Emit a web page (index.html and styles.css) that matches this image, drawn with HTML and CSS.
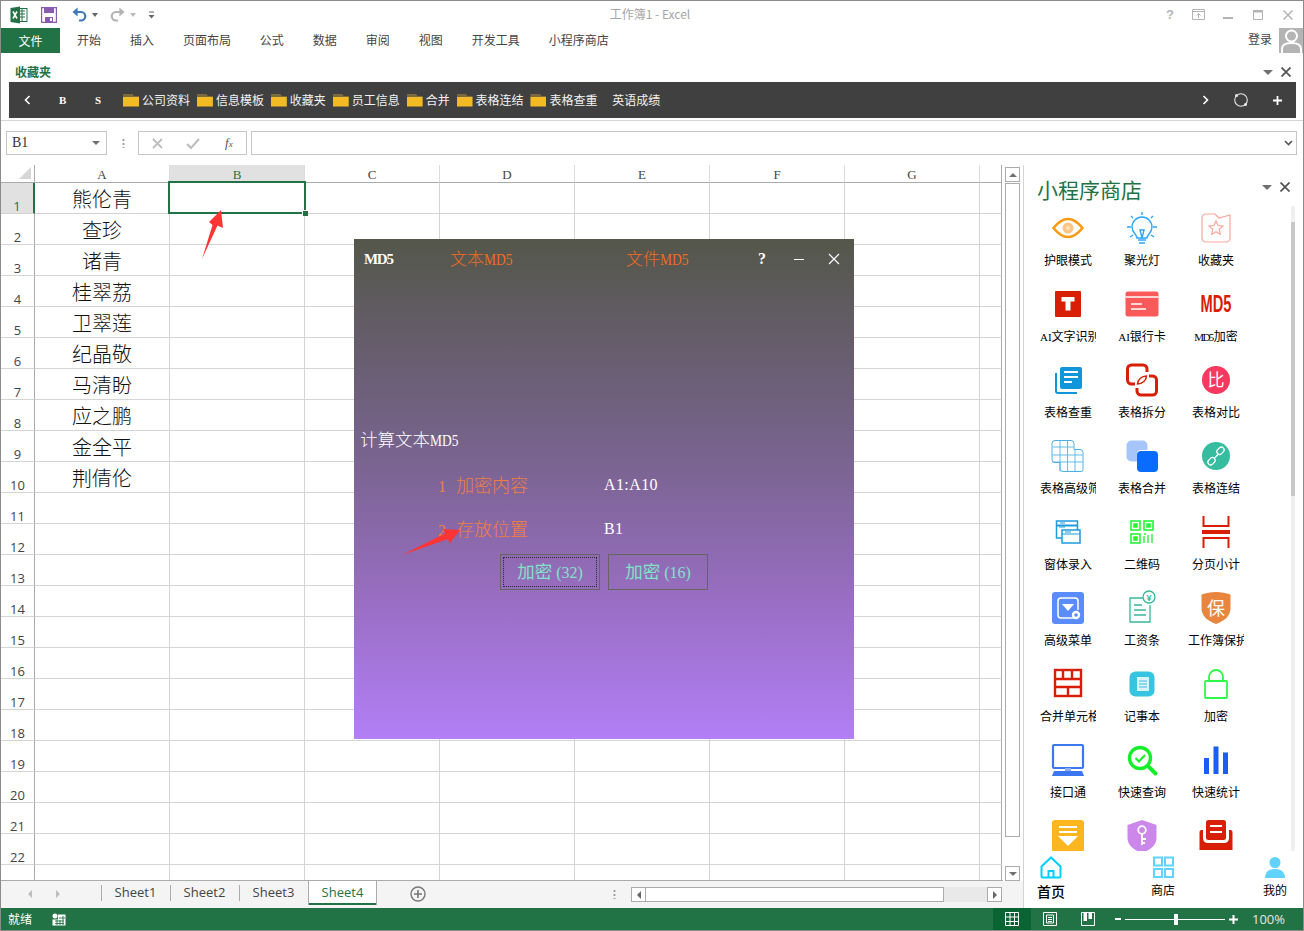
FILE: index.html
```html
<!DOCTYPE html>
<html lang="zh">
<head>
<meta charset="utf-8">
<title>工作簿1 - Excel</title>
<link rel="stylesheet" href="styles.css">
</head>
<body>
<div class="app">
  <header class="titlebar">
    <div class="qat">
      <svg class="q-xl" width="18" height="18" viewBox="0 0 18 18"><rect x="7" y="2.500" width="10" height="13" fill="#fff" stroke="#217346"/><path d="M9 5h6M9 8h6M9 11h6M12 3v12" stroke="#217346" stroke-width="1"/><path d="M0.500 2 10 .5v17L.5 16z" fill="#217346"/><path d="M3 5.500l4 7M7 5.500l-4 7" stroke="#fff" stroke-width="1.600"/></svg>
      <svg class="q-save" width="16" height="16" viewBox="0 0 16 16"><path d="M.5.500h15v15H.5z" fill="#fff" stroke="#8a5bb0" stroke-width="1.400"/><path d="M3 1h10v5H3z" fill="#8a5bb0"/><path d="M4 10h8v5.500H4z" fill="#8a5bb0"/><path d="M9 11h2v3H9z" fill="#fff"/></svg>
      <svg class="q-undo" width="15" height="15" viewBox="0 0 15 15"><path d="M2.500 5H9a4.200 4.200 0 0 1 0 8.500H7" fill="none" stroke="#3e78b8" stroke-width="2.200"/><path d="M5.600.6v9L.5 5z" fill="#3e78b8"/></svg>
      <span class="caret c-a"></span>
      <svg class="q-redo" width="15" height="15" viewBox="0 0 15 15"><path d="M12.500 5H6a4.200 4.200 0 0 0 0 8.500H8" fill="none" stroke="#b4b4b4" stroke-width="2.200"/><path d="M9.400.6v9L14.500 5z" fill="#b4b4b4"/></svg>
      <span class="caret c-b"></span>
      <svg class="q-more" width="7" height="8" viewBox="0 0 7 8"><path d="M1 1h5" stroke="#666"/><path d="M.5 4h6L3.500 7.500z" fill="#666"/></svg>
    </div>
    <div class="doc-title">工作簿1 - Excel</div>
    <div class="winbtns">
      <span class="help">?</span>
      <svg width="13" height="11" viewBox="0 0 13 11"><path d="M.5.500h12v10H.5z" fill="none" stroke="#b4b4b4"/><path d="M1 2.500h11" stroke="#b4b4b4"/><path d="M6.500 9V4.500M4.500 6.500l2-2 2 2" fill="none" stroke="#b4b4b4"/></svg>
      <svg width="10" height="11" viewBox="0 0 10 11"><path d="M0 9h10" stroke="#b4b4b4" stroke-width="2"/></svg>
      <svg width="10" height="10" viewBox="0 0 10 10"><path d="M.5.500h9v9h-9z" fill="none" stroke="#b4b4b4"/><path d="M0 1.500h10" stroke="#b4b4b4" stroke-width="2"/></svg>
      <svg width="10" height="10" viewBox="0 0 10 10"><path d="M.5.500l9 9M9.500.500l-9 9" stroke="#b4b4b4" stroke-width="1.500"/></svg>
    </div>
  </header>

  <nav class="tabs">
    <span class="tab-file">文件</span>
    <div class="tab-list">
      <span>开始</span><span>插入</span><span>页面布局</span><span>公式</span><span>数据</span><span>审阅</span><span>视图</span><span>开发工具</span><span>小程序商店</span>
    </div>
    <div class="login">登录</div>
    <div class="avatar"><svg width="25" height="25" viewBox="0 0 25 25"><circle cx="12.500" cy="8" r="5.500" fill="none" stroke="#fff" stroke-width="2"/><path d="M3 25v-4c0-4 4-6 9.500-6s9.500 2 9.500 6v4" fill="none" stroke="#fff" stroke-width="2"/></svg></div>
  </nav>

  <section class="ribbon">
    <div class="fav-head">
      <span class="fav-title">收藏夹</span>
      <span class="pane-tools"><span class="tri"></span><svg width="10" height="10" viewBox="0 0 10 10"><path d="M.5.500l9 9M9.500.500l-9 9" stroke="#555" stroke-width="1.800"/></svg></span>
    </div>
    <div class="fav-bar">
      <svg class="fb-prev" width="7" height="10" viewBox="0 0 7 10"><path d="M5.500 1l-4 4 4 4" fill="none" stroke="#fff" stroke-width="1.600"/></svg>
      <span class="fb-b">B</span>
      <span class="fb-s">S</span>
      <span class="fb-item"><i class="folder"></i>公司资料</span>
      <span class="fb-item"><i class="folder"></i>信息模板</span>
      <span class="fb-item"><i class="folder"></i>收藏夹</span>
      <span class="fb-item"><i class="folder"></i>员工信息</span>
      <span class="fb-item"><i class="folder"></i>合并</span>
      <span class="fb-item"><i class="folder"></i>表格连结</span>
      <span class="fb-item"><i class="folder"></i>表格查重</span>
      <span class="fb-plain">英语成绩</span>
      <svg class="fb-next" width="7" height="10" viewBox="0 0 7 10"><path d="M1.500 1l4 4-4 4" fill="none" stroke="#fff" stroke-width="1.600"/></svg>
      <svg class="fb-refresh" width="16" height="16" viewBox="0 0 16 16"><circle cx="8" cy="8" r="6.300" fill="none" stroke="#e8e8e8" stroke-width="1.100"/><circle cx="3.500" cy="3.500" r="1.500" fill="#e8e8e8"/><circle cx="12.500" cy="12.500" r="1.500" fill="#e8e8e8"/></svg>
      <svg class="fb-plus" width="9" height="9" viewBox="0 0 9 9"><path d="M4.500 0v9M0 4.500h9" stroke="#fff" stroke-width="1.800"/></svg>
    </div>
  </section>

  <section class="formula">
    <div class="namebox"><span class="lat-l">B1</span><span class="tri tri-s"></span></div>
    <div class="dots"></div>
    <div class="fx-box">
      <svg width="11" height="11" viewBox="0 0 11 11"><path d="M1 1l9 9M10 1l-9 9" stroke="#bdbdbd" stroke-width="1.800"/></svg>
      <svg width="14" height="11" viewBox="0 0 14 11"><path d="M1 6l4 4 8-9" fill="none" stroke="#bdbdbd" stroke-width="2"/></svg>
      <span class="fx">f<span class="fx-x">x</span></span>
    </div>
    <div class="fx-input"><svg width="9" height="6" viewBox="0 0 9 6"><path d="M1 1l3.500 3.500L8 1" fill="none" stroke="#555" stroke-width="1.600"/></svg></div>
  </section>

  <main class="workspace">
    <div class="book">
      <div class="sheet-row">
        <div class="grid-wrap">
          <table class="grid">
            <thead>
              <tr><th class="corner"><i></i></th><th>A</th><th class="on">B</th><th>C</th><th>D</th><th>E</th><th>F</th><th>G</th><th></th></tr>
            </thead>
            <tbody>
              <tr><th class="on">1</th><td>熊伦青</td><td class="sel"><div class="selbox"><i></i></div></td><td></td><td></td><td></td><td></td><td></td><td></td></tr>
              <tr><th>2</th><td>查珍</td><td></td><td></td><td></td><td></td><td></td><td></td><td></td></tr>
              <tr><th>3</th><td>诸青</td><td></td><td></td><td></td><td></td><td></td><td></td><td></td></tr>
              <tr><th>4</th><td>桂翠荔</td><td></td><td></td><td></td><td></td><td></td><td></td><td></td></tr>
              <tr><th>5</th><td>卫翠莲</td><td></td><td></td><td></td><td></td><td></td><td></td><td></td></tr>
              <tr><th>6</th><td>纪晶敬</td><td></td><td></td><td></td><td></td><td></td><td></td><td></td></tr>
              <tr><th>7</th><td>马清盼</td><td></td><td></td><td></td><td></td><td></td><td></td><td></td></tr>
              <tr><th>8</th><td>应之鹏</td><td></td><td></td><td></td><td></td><td></td><td></td><td></td></tr>
              <tr><th>9</th><td>金全平</td><td></td><td></td><td></td><td></td><td></td><td></td><td></td></tr>
              <tr><th>10</th><td>荆倩伦</td><td></td><td></td><td></td><td></td><td></td><td></td><td></td></tr>
              <tr><th>11</th><td></td><td></td><td></td><td></td><td></td><td></td><td></td><td></td></tr>
              <tr><th>12</th><td></td><td></td><td></td><td></td><td></td><td></td><td></td><td></td></tr>
              <tr><th>13</th><td></td><td></td><td></td><td></td><td></td><td></td><td></td><td></td></tr>
              <tr><th>14</th><td></td><td></td><td></td><td></td><td></td><td></td><td></td><td></td></tr>
              <tr><th>15</th><td></td><td></td><td></td><td></td><td></td><td></td><td></td><td></td></tr>
              <tr><th>16</th><td></td><td></td><td></td><td></td><td></td><td></td><td></td><td></td></tr>
              <tr><th>17</th><td></td><td></td><td></td><td></td><td></td><td></td><td></td><td></td></tr>
              <tr><th>18</th><td></td><td></td><td></td><td></td><td></td><td></td><td></td><td></td></tr>
              <tr><th>19</th><td></td><td></td><td></td><td></td><td></td><td></td><td></td><td></td></tr>
              <tr><th>20</th><td></td><td></td><td></td><td></td><td></td><td></td><td></td><td></td></tr>
              <tr><th>21</th><td></td><td></td><td></td><td></td><td></td><td></td><td></td><td></td></tr>
              <tr><th>22</th><td></td><td></td><td></td><td></td><td></td><td></td><td></td><td></td></tr>
              <tr><th></th><td></td><td></td><td></td><td></td><td></td><td></td><td></td><td></td></tr>
            </tbody>
          </table>
        </div>
        <div class="vscroll">
          <span class="sb-btn"><i class="up"></i></span>
          <span class="sb-thumb"></span>
          <span class="sb-btn"><i class="down"></i></span>
        </div>
      </div>
      <div class="sheet-bar">
        <div class="sheet-nav"><i class="left"></i><i class="right"></i></div>
        <div class="sheet-tabs">
          <span>Sheet1</span><span>Sheet2</span><span>Sheet3</span><span class="active">Sheet4</span>
        </div>
        <svg class="add-sheet" width="16" height="16" viewBox="0 0 16 16"><circle cx="8" cy="8" r="7" fill="none" stroke="#777" stroke-width="1.400"/><path d="M8 4v8M4 8h8" stroke="#777" stroke-width="1.600"/></svg>
        <div class="dots dots-h"></div>
        <div class="hscroll">
          <span class="hs-btn"><i class="left dark"></i></span>
          <span class="hs-thumb"></span>
          <span class="hs-btn"><i class="right dark"></i></span>
        </div>
      </div>
    </div>

    <aside class="pane">
      <div class="pane-head">
        <h2>小程序商店</h2>
        <span class="pane-tools"><span class="tri"></span><svg width="10" height="10" viewBox="0 0 10 10"><path d="M.5.500l9 9M9.500.500l-9 9" stroke="#555" stroke-width="1.800"/></svg></span>
      </div>
      <div class="pane-body">
        <div class="tiles">
          <div class="tile"><svg width="40" height="40" viewBox="0 0 40 40"><path d="M5.500 20Q20 2 34.500 20 20 38 5.500 20z" fill="#fff" stroke="#fa9a14" stroke-width="2.600"/><circle cx="20" cy="20" r="5.500" fill="#fbc583"/><circle cx="20" cy="20" r="2" fill="#fde3c3"/></svg><span>护眼模式</span></div>
          <div class="tile"><svg width="40" height="40" viewBox="0 -3 40 40" fill="none" stroke="#2ea7ff" stroke-width="1.400"><path d="M15 27c0-4-5-5-5-11a10 10 0 0 1 20 0c0 6-5 7-5 11z"/><path d="M16 29h8M17 32h6M18 19h4l-2 8zM20 1v3M9 5l2 2M31 5l-2 2M5 16h4M31 16h4M8 26l3-2M32 26l-3-2"/></svg><span>聚光灯</span></div>
          <div class="tile"><svg width="40" height="40" viewBox="0 0 40 40" fill="none" stroke="#f9a79a" stroke-width="1.200"><path d="M6 10a4 4 0 0 1 4-4h9l4 4 11-3v23a4 4 0 0 1-4 4H10a4 4 0 0 1-4-4z"/><path d="M20 13l2 4.500 5 .5-3.700 3.300 1 5-4.300-2.500-4.300 2.500 1-5L13 18l5-.5z"/></svg><span>收藏夹</span></div>

          <div class="tile"><svg width="40" height="40" viewBox="0 0 40 40"><rect x="7" y="7" width="26" height="26" rx="1" fill="#d81e06"/><path d="M13.500 13h13v4.500h-4v9h-5v-9h-4z" fill="#fff"/></svg><span><b class="lat">AI</b>文字识别</span></div>
          <div class="tile"><svg width="40" height="40" viewBox="0 0 40 40"><rect x="3.500" y="7.500" width="33" height="25" rx="2.500" fill="#fb5a5a"/><path d="M3.500 13h33" stroke="#fff" stroke-width="1.500"/><path d="M9 20h11M9 25h15" stroke="#fff" stroke-width="1.500"/></svg><span><b class="lat">AI</b>银行卡</span></div>
          <div class="tile"><svg width="40" height="40" viewBox="0 0 40 40"><text class="md5" x="4.500" y="28" textLength="31" lengthAdjust="spacingAndGlyphs">MD5</text></svg><span><b class="lat tight">MD5</b>加密</span></div>

          <div class="tile"><svg width="40" height="40" viewBox="0 0 40 40"><rect x="12" y="7" width="22" height="22" rx="2" fill="#1296db"/><path d="M8 13v18a2 2 0 0 0 2 2h19" fill="none" stroke="#1296db" stroke-width="2"/><path d="M16 12h14M16 17h14M16 22h8" stroke="#fff" stroke-width="2.200"/></svg><span>表格查重</span></div>
          <div class="tile"><svg width="40" height="40" viewBox="0 0 40 40" fill="none" stroke="#d81e06" stroke-width="3"><path d="M25 12V9a4 4 0 0 0-4-4H9.500a4 4 0 0 0-4 4v11a4 4 0 0 0 4 4H13"/><path d="M15 28v3a4 4 0 0 0 4 4h11.500a4 4 0 0 0 4-4V20a4 4 0 0 0-4-4H27"/><path d="M15.500 24c0-4 4-8 9-8 0 4-4 8-9 8z" stroke-width="1.500"/></svg><span>表格拆分</span></div>
          <div class="tile"><svg width="40" height="40" viewBox="0 0 40 40"><circle cx="20" cy="20" r="14" fill="#f9395f"/><text class="inicon" x="20" y="26" font-size="17">比</text></svg><span>表格对比</span></div>

          <div class="tile"><svg width="40" height="40" viewBox="0 0 40 40" fill="none" stroke="#49b1e8"><path d="M7 4.500h16a3 3 0 0 1 3 3v6h6a3 3 0 0 1 3 3v17a2 2 0 0 1-2 2H15a3 3 0 0 1-3-3v-6H7a3 3 0 0 1-3-3V7.500a3 3 0 0 1 3-3z"/><path d="M4.500 11h21M4.500 19h30M4.500 26h30M12 4.500v31M19.500 4.500v31M27 13v22" stroke-opacity=".85"/></svg><span>表格高级筛选</span></div>
          <div class="tile"><svg width="40" height="40" viewBox="0 0 40 40"><rect x="4.500" y="4.500" width="21" height="21" rx="5" fill="#a6c5fb"/><rect x="15" y="14" width="21" height="21" rx="4" fill="#fff"/><rect x="15" y="15" width="21" height="21" rx="4" fill="#0a6cff"/></svg><span>表格合并</span></div>
          <div class="tile"><svg width="40" height="40" viewBox="0 0 40 40"><circle cx="20" cy="20" r="14" fill="#36bd9f"/><g fill="none" stroke="#fff" stroke-width="1.300"><path d="M18.500 22l4-4"/><rect x="20.500" y="12" width="8" height="5.500" rx="2.700" transform="rotate(-45 24.500 14.800)"/><rect x="11.500" y="22.500" width="8" height="5.500" rx="2.700" transform="rotate(-45 15.500 25.200)"/></g></svg><span>表格连结</span></div>

          <div class="tile"><svg width="40" height="40" viewBox="0 0 40 40" fill="#fff" stroke="#1d9bdb" stroke-width="1.500"><rect x="8.500" y="9" width="21" height="17"/><path d="M8.500 13.500h21" stroke-width="2"/><rect x="14" y="18" width="18" height="13"/><path d="M14 22h18M17 20h6M12 11h5M11 15h6" stroke-width="1.200"/></svg><span>窗体录入</span></div>
          <div class="tile"><svg width="40" height="40" viewBox="0 0 40 40" fill="none" stroke="#25f53a" stroke-width="1.600"><rect x="9" y="9" width="9" height="9"/><rect x="22" y="9" width="9" height="9"/><rect x="9" y="22" width="9" height="9"/><path d="M12 12h3v3h-3zM25 12h3v3h-3zM12 25h3v3h-3z" fill="#25f53a"/><path d="M22 24v7M26 23v8M30 22v9M22 22h2" stroke-width="1.400"/></svg><span>二维码</span></div>
          <div class="tile"><svg width="40" height="40" viewBox="0 0 40 40"><path d="M6 20h28" stroke="#d81e06" stroke-width="4"/><path d="M7.500 4v10h25V4M7.500 36V26h25v10" fill="none" stroke="#d81e06" stroke-width="2"/></svg><span>分页小计</span></div>

          <div class="tile"><svg width="40" height="40" viewBox="0 0 40 40"><rect x="4" y="4" width="32" height="32" rx="3" fill="#5b8cff"/><path d="M26 30H13a3 3 0 0 1-3-3V13a3 3 0 0 1 3-3h14a3 3 0 0 1 3 3v9" fill="none" stroke="#fff" stroke-width="1.500"/><path d="M14 16h12l-6 7z" fill="#fff"/><circle cx="28" cy="27" r="3" fill="none" stroke="#fff" stroke-width="2.400"/></svg><span>高级菜单</span></div>
          <div class="tile"><svg width="40" height="40" viewBox="0 0 40 40" fill="none" stroke="#36b89a" stroke-width="1.300"><path d="M25 10H8v24h20V17"/><path d="M12 17h8M12 22h12M12 27h12" stroke-width="1.500"/><circle cx="27" cy="9" r="6" fill="#fff"/><text class="yen" x="27" y="12.500" font-size="9">¥</text></svg><span>工资条</span></div>
          <div class="tile"><svg width="40" height="40" viewBox="0 0 40 40"><path d="M20 4c5 0 10 1 14.500 2.500V20c0 8-6 13-14.500 16C11.500 33 5.500 28 5.500 20V6.500C10 5 15 4 20 4z" fill="#e8853f"/><text class="inicon" x="20" y="27" font-size="18">保</text></svg><span>工作簿保护</span></div>

          <div class="tile"><svg width="40" height="40" viewBox="0 0 40 40" fill="none" stroke="#d81e06" stroke-width="2.400"><rect x="7" y="6" width="26" height="26"/><path d="M7 15h26M7 23h26M15 6v9M24 6v9M20 23v9"/></svg><span>合并单元格</span></div>
          <div class="tile"><svg width="40" height="40" viewBox="0 0 40 40"><rect x="7.500" y="7.500" width="25" height="25" rx="6" fill="#36c5e0"/><rect x="15" y="13" width="12" height="14" fill="#d7f3f9"/><path d="M17 17h8M17 20h8M17 23h8M13 16v8" stroke="#36c5e0"/></svg><span>记事本</span></div>
          <div class="tile"><svg width="40" height="40" viewBox="0 0 40 40" fill="none" stroke="#2ff84a" stroke-width="1.800"><rect x="9" y="17" width="22" height="17" rx="1"/><path d="M13 17v-4a7 7 0 0 1 14 0v4"/></svg><span>加密</span></div>

          <div class="tile"><svg width="40" height="40" viewBox="0 0 40 40"><rect x="5" y="5" width="30" height="23" rx="1" fill="#fff" stroke="#3b77f0" stroke-width="2.200"/><path d="M17 28h6v3h-6z" fill="#8fb0f5"/><path d="M6 31h28l2 5H4z" fill="#3b77f0"/></svg><span>接口通</span></div>
          <div class="tile"><svg width="40" height="40" viewBox="0 0 40 40" fill="none" stroke="#16ee2c"><circle cx="18" cy="18" r="10.500" stroke-width="3.400"/><path d="M26 26l7.500 7.500" stroke-width="4" stroke-linecap="round"/><path d="M13.500 18l3.500 3.500 6-6.500" stroke-width="2"/></svg><span>快速查询</span></div>
          <div class="tile"><svg width="40" height="40" viewBox="0 -2 40 40" fill="#1a5ef5"><path d="M8 16h5v16H8zM17.500 4.500h5V32h-5zM27 10.500h5V32h-5z"/></svg><span>快速统计</span></div>

          <div class="tile"><svg width="40" height="40" viewBox="0 0 40 40"><rect x="4" y="4" width="32" height="32" rx="3" fill="#fdb61f"/><path d="M11 11h18M11 16h18" stroke="#fff" stroke-width="2"/><path d="M10 20h20L20 30z" fill="#fff"/></svg><span>数据录入</span></div>
          <div class="tile"><svg width="40" height="40" viewBox="0 0 40 40"><path d="M20 4l14.500 5v13c0 7-6 12-14.500 15C11.500 34 5.500 29 5.500 22V9z" fill="#cb88ea"/><circle cx="20" cy="14" r="3.800" fill="none" stroke="#fff" stroke-width="1.800"/><path d="M20 18v11M20 23h4M20 27h3" stroke="#fff" stroke-width="1.800"/></svg><span>密钥</span></div>
          <div class="tile"><svg width="40" height="40" viewBox="0 0 40 40" fill="#d81e06"><rect x="10" y="4" width="20" height="20" rx="2.500"/><path d="M3.500 16a2 2 0 0 1 2-2H7v8c0 3 2 5 5 5h16c3 0 5-2 5-5v-8h1.500a2 2 0 0 1 2 2v18h-33z"/><path d="M14 10h12M14 16h12" stroke="#fff" stroke-width="1.800"/></svg><span>工具</span></div>
        </div>
        <div class="pane-scroll"><i></i></div>
      </div>
      <div class="pane-nav">
        <div class="nav-item current"><svg width="24" height="24" viewBox="0 0 24 24" fill="none" stroke="#00cfff" stroke-width="2"><path d="M12 2.500 2.500 11.500v9.500a1.500 1.500 0 0 0 1.500 1.500h16a1.500 1.500 0 0 0 1.500-1.500v-9.500z"/><path d="M9.500 22v-6h5v6"/></svg><span>首页</span></div>
        <div class="nav-item"><svg width="24" height="24" viewBox="0 0 24 24" fill="none" stroke="#5fd3fb" stroke-width="2"><rect x="3" y="2.500" width="8" height="8"/><rect x="14" y="2.500" width="8" height="8"/><rect x="3" y="14" width="8" height="8"/><rect x="14" y="14" width="8" height="8"/></svg><span>商店</span></div>
        <div class="nav-item"><svg width="24" height="24" viewBox="0 0 24 24" fill="#5fd3fb"><circle cx="12" cy="7.500" r="5.500"/><path d="M2 23c0-6 4-9 10-9s10 3 10 9z"/></svg><span>我的</span></div>
      </div>
    </aside>
  </main>

  <footer class="status">
    <span class="ready">就绪</span>
    <svg class="macro" width="14" height="13" viewBox="0 0 14 13"><circle cx="3" cy="3" r="2.500" fill="#fff"/><path d="M6 1.500h7.500v11H.5V6.500H6z" fill="#fff"/><path d="M3 8h9M3 10.500h9M5 7v5M8 7v5M11 3v9M7 5h6" stroke="#217346" stroke-width=".9"/></svg>
    <div class="views">
      <span class="view on"><svg width="14" height="14" viewBox="0 0 14 14" fill="none" stroke="#fff"><path d="M.5.500h13v13H.5zM.5 5h13M.5 9.500h13M5 .5v13M9.500.5v13"/></svg></span>
      <span class="view"><svg width="14" height="14" viewBox="0 0 14 14" fill="none" stroke="#fff"><path d="M.5.500h13v13H.5z"/><path d="M3.500 3h7v8h-7zM5 5.500h4M5 7.500h4M5 9.500h4"/></svg></span>
      <span class="view"><svg width="14" height="14" viewBox="0 0 14 14"><path d="M.5.500h13v13H.5z" fill="none" stroke="#fff"/><path d="M2.500 1h3.500v8H2.500zM7.500 1h3.500v6H7.500z" fill="#fff"/></svg></span>
    </div>
    <div class="zoom">
      <i class="minus"></i>
      <div class="slider"><i></i></div>
      <svg width="9" height="9" viewBox="0 0 9 9"><path d="M4.500 0v9M0 4.500h9" stroke="#fff" stroke-width="2"/></svg>
    </div>
    <span class="pct">100%</span>
  </footer>

  <div class="dialog">
    <div class="dlg-head">
      <b class="dlg-name">MD5</b>
      <span class="dlg-tab tab-one">文本<span class="lat narrow">MD5</span></span>
      <span class="dlg-tab tab-two">文件<span class="lat narrow">MD5</span></span>
      <span class="dlg-help">?</span>
      <svg class="dlg-min" width="10" height="3" viewBox="0 0 10 3"><path d="M0 1.500h10" stroke="#fff"/></svg>
      <svg class="dlg-close" width="12" height="12" viewBox="0 0 12 12"><path d="M1 1l10 10M11 1L1 11" stroke="#fff" stroke-width="1.200"/></svg>
    </div>
    <div class="dlg-body">
      <div class="dlg-title">计算文本<span class="lat narrow">MD5</span></div>
      <div class="dlg-row"><span class="dlg-key"><span class="lat num">1</span>加密内容</span><span class="dlg-val lat">A1:A10</span></div>
      <div class="dlg-row"><span class="dlg-key"><span class="lat num">2</span>存放位置</span><span class="dlg-val lat">B1</span></div>
      <div class="dlg-actions">
        <button class="dlg-btn focus">加密<span class="lat">(32)</span></button>
        <button class="dlg-btn">加密<span class="lat">(16)</span></button>
      </div>
    </div>
  </div>

  <svg class="arrows" width="1304" height="931" viewBox="0 0 1304 931">
    <path d="M202 259 212.500 225 209 222 221 210 223 228 217.500 225.500z" fill="#ff3535"/>
    <path d="M402 555 445 533.500 443 529 460 530 449.500 543.500 448 539z" fill="#ff3535"/>
  </svg>
</div>
</body>
</html>
```

FILE: styles.css
```css
* { box-sizing: border-box; }
html, body { margin: 0; padding: 0; }
body {
  width: 1304px;
  height: 931px;
  overflow: hidden;
  background: #fff;
  font-family: "Noto Sans CJK SC", "Liberation Sans", sans-serif;
  font-size: 12px;
  line-height: 16px;
  color: #000;
}
.lat { font-family: "Liberation Serif", "Noto Sans CJK SC", serif; font-size: .89em; font-weight: normal; }
.tile .lat { font-size: 11px; }
.lat.narrow { display: inline-block; font-size: 16px; transform: scaleX(.84); transform-origin: 0 50%; margin-right: -5px; }
.tile .lat.tight { letter-spacing: -1.600px; margin-right: 1px; }
.app {
  position: relative;
  width: 1304px;
  height: 931px;
  display: flex;
  flex-direction: column;
  border: 1px solid #8c8c8c;
  background: #fff;
  overflow: hidden;
}

/* title bar */
.titlebar { height: 27px; flex: none; display: grid; grid-template-columns: 1fr auto 1fr; align-items: center; }
.qat { display: flex; align-items: center; padding-left: 9px; }
.q-save { margin-left: 13px; }
.q-undo { margin-left: 15px; }
.caret { width: 0; height: 0; border: 3px solid transparent; border-top: 4px solid #666; border-bottom: 0; margin-left: 5px; }
.caret.c-b { border-top-color: #bbb; }
.q-redo { margin-left: 12px; }
.q-more { margin-left: 12px; }
.doc-title { color: #a6a6a6; padding-right: 4px; margin-top: -2px; }
.winbtns { display: flex; align-items: center; justify-content: flex-end; padding-right: 10px; }
.winbtns .help { color: #b4b4b4; font: bold 13px/16px "Liberation Sans", sans-serif; }
.winbtns svg:nth-child(2) { margin-left: 18px; }
.winbtns svg:nth-child(3) { margin-left: 18px; }
.winbtns svg:nth-child(4) { margin-left: 20px; }
.winbtns svg:nth-child(5) { margin-left: 20px; }

/* tabs */
.tabs { height: 26px; flex: none; display: flex; align-items: flex-start; }
.tab-file { width: 59px; height: 25px; background: #217346; color: #fff; text-align: center; line-height: 25px; }
.tab-list { display: flex; gap: 28.950px; padding-left: 17px; line-height: 24px; color: #444; flex: 1; }
.login { line-height: 22px; color: #444; margin-right: 7px; }
.avatar { width: 24px; height: 25px; background: #b4b4b4; overflow: hidden; }

/* ribbon */
.ribbon { height: 67px; flex: none; padding: 0 7px 0 8px; border-bottom: 1px solid #d4d4d4; }
.fav-head { height: 28px; display: flex; align-items: center; justify-content: space-between; padding: 8px 0 0 6px; }
.fav-title { color: #217346; font-weight: 700; }
.pane-tools { display: flex; align-items: center; gap: 8px; margin-right: 5px; }
.tri { width: 0; height: 0; border: 5px solid transparent; border-top: 5px solid #707070; border-bottom: 0; }
.fav-bar { height: 36px; background: #404040; display: flex; align-items: center; color: #f2f2f2; }
.fb-prev { margin-left: 15px; }
.fb-b { margin-left: 28px; color: #fff; font: bold 11px/16px "Liberation Serif", serif; width: 7px; }
.fb-s { margin-left: 29px; color: #fff; font: bold 11px/16px "Liberation Serif", serif; width: 6px; }
.fb-item { display: flex; align-items: center; margin-right: 6.900px; }
.fb-item:nth-of-type(3) { margin-left: 22px; }
.folder { width: 16px; height: 13px; margin-right: 3px; background: linear-gradient(180deg, #7a6a3e 0 3px, #f3bb23 3px); clip-path: polygon(0 0, 55% 0, 70% 20%, 100% 20%, 100% 100%, 0 100%); display: block; }
.fb-plain { margin-left: 8px; flex: 1; }
.fb-next { margin-right: 24px; }
.fb-refresh { margin-right: 24px; }
.fb-plus { margin-right: 14px; }

/* formula */
.formula { height: 44px; flex: none; display: flex; align-items: flex-start; padding: 10px 6px 0 5px; }
.namebox { width: 101px; height: 24px; border: 1px solid #c6c6c6; display: flex; justify-content: space-between; align-items: center; padding: 0 6px 0 5px; }
.lat-l { font-family: "Liberation Serif", serif; font-size: 14px; color: #333; }
.tri-s { border-width: 4px; border-top-width: 4px; border-bottom: 0; }
.dots { width: 3px; height: 10px; margin: 7px 13px 0 15px; background: radial-gradient(circle, #9a9a9a 1px, transparent 1.200px) 0 0 / 3px 4px; }
.fx-box { width: 109px; height: 24px; border: 1px solid #c6c6c6; display: flex; align-items: center; padding-left: 13px; gap: 23px; }
.fx { font: italic 13px/16px "Liberation Serif", serif; color: #555; margin-left: 2px; }
.fx-x { font-size: 9px; }
.fx-input { flex: 1; height: 24px; margin-left: 4px; border: 1px solid #c6c6c6; display: flex; align-items: center; justify-content: flex-end; padding-right: 3px; }

/* workspace */
.workspace { flex: 1; min-height: 0; display: flex; }
.book { width: 1022px; flex: none; display: flex; flex-direction: column; }
.sheet-row { height: 716px; flex: none; display: flex; }
.grid-wrap { width: 1002px; flex: none; height: 716px; overflow: hidden; border-bottom: 1px solid #ababab; }
.grid { border-collapse: separate; border-spacing: 0; table-layout: fixed; width: 1001px; }
.grid th, .grid td { padding: 0; height: 31px; border-right: 1px solid #d4d4d4; border-bottom: 1px solid #d4d4d4; }
.grid thead th { height: 18px; width: 135px; padding-top: 3px; font: 13px/14px "Liberation Serif", serif; color: #444; border-right-color: #dcdcdc; border-bottom: 1px solid #ababab; }
.grid thead th.corner { width: 34px; position: relative; border-right-color: #ababab; }
.corner i { position: absolute; right: 3px; bottom: 3px; border: 6px solid #d6d6d6; border-top-color: transparent; border-left-color: transparent; }
.grid thead th:last-child { width: 22px; border-right: 1px solid #ababab; }
.grid tbody th { width: 34px; font: 13px/13px "Open Sans", sans-serif; color: #444; vertical-align: bottom; border-right-color: #ababab; }
.grid tbody td:last-child { border-right-color: #ababab; }
.grid th.on { background: #e1e1e1; color: #217346; }
.grid tbody th.on { border-right: 2px solid #217346; }
.grid td { font-size: 20px; line-height: 28px; text-align: center; vertical-align: bottom; white-space: nowrap; color: #111; font-weight: 300; }
.sel { position: relative; }
.selbox { position: absolute; left: -2px; top: -2px; right: -2px; bottom: -1px; border: 2px solid #217346; }
.selbox i { position: absolute; right: -4px; bottom: -4px; width: 6px; height: 6px; background: #217346; border: 1px solid #fff; border-width: 1px 0 0 1px; }

.vscroll { flex: 1; display: flex; flex-direction: column; padding: 2px 3px 0 2px; background: #fff; gap: 1px; height: 715px; }
.sb-btn { height: 15px; flex: none; border: 1px solid #ababab; display: flex; align-items: center; justify-content: center; }
.sb-thumb { height: 654px; flex: none; border: 1px solid #ababab; margin-bottom: 28px; }
.up { border: 4px solid transparent; border-bottom: 4px solid #707070; border-top: 0; }
.down { border: 4px solid transparent; border-top: 4px solid #707070; border-bottom: 0; }

.sheet-bar { height: 27px; flex: none; background: #f4f4f4; display: flex; align-items: flex-start; }
.sheet-nav { width: 100px; display: flex; gap: 24px; padding: 9px 0 0 27px; }
.left { border: 4px solid transparent; border-right: 4px solid #bdbdbd; border-left: 0; }
.right { border: 4px solid transparent; border-left: 4px solid #bdbdbd; border-right: 0; }
.left.dark { border-right-color: #666; }
.right.dark { border-left-color: #666; }
.sheet-tabs { display: flex; height: 24px; font: 13px/23px "Open Sans", sans-serif; color: #444; }
.sheet-tabs span { width: 69px; text-align: center; position: relative; background: #f4f4f4; }
.sheet-tabs span::before { content: ""; position: absolute; left: 0; top: 4px; height: 16px; width: 1px; background: #ababab; }
.sheet-tabs .active { background: #fff; color: #217346; border-bottom: 2px solid #217346; box-shadow: 1px 0 0 #ababab, -1px 0 0 #ababab; width: 67px; margin-left: 1px; }
.sheet-tabs .active::before { display: none; }
.add-sheet { margin: 5px 0 0 34px; }
.dots-h { margin: 8px 15px 0 187px; }
.hscroll { display: flex; margin-top: 6px; width: 371px; height: 15px; background: #e9e9e9; }
.hs-btn { width: 15px; height: 15px; flex: none; background: #fff; border: 1px solid #ababab; display: flex; align-items: center; justify-content: center; }
.hs-thumb { width: 298px; background: #fff; border: 1px solid #ababab; border-left: 0; margin-right: auto; }

/* pane */
.pane { flex: 1; min-width: 0; border-left: 1px solid #d4d4d4; display: flex; flex-direction: column; position: relative; }
.pane-head { height: 41px; flex: none; display: flex; align-items: flex-start; justify-content: space-between; padding: 11px 13px 0 13px; }
.pane-head h2 { margin: 0; font-size: 21px; font-weight: 400; line-height: 26px; color: #217346; }
.pane-head .pane-tools { margin: 6px 0 0; }
.pane-body { height: 645px; flex: none; display: flex; overflow: hidden; }
.tiles { width: 267px; padding: 2px 0 0 7px; display: grid; grid-template-columns: repeat(3, 74px); grid-auto-rows: 76px; align-content: start; }
.tile { display: flex; flex-direction: column; align-items: center; }
.tile svg { flex: none; display: block; }
.tile > span { display: block; width: 56px; margin-top: 4px; text-align: center; white-space: nowrap; overflow: hidden; line-height: 16px; }
.md5 { font: bold 24px "Liberation Sans", sans-serif; fill: #d81e06; }
.inicon { fill: #fff; text-anchor: middle; font-family: "Noto Sans CJK SC", sans-serif; }
.yen { fill: #36b89a; stroke: none; text-anchor: middle; font-family: "Liberation Sans", sans-serif; font-weight: 700; }
.pane-scroll { width: 4px; background: #f0f0f0; padding-top: 16px; }
.pane-scroll i { display: block; height: 274px; background: #c8c8c8; }
.pane-nav { flex: 1; display: flex; gap: 72px; padding: 4px 0 0 7px; }
.nav-item { width: 40px; display: flex; flex-direction: column; align-items: center; }
.nav-item span { margin-top: 1px; line-height: 20px; }
.nav-item.current span { font-size: 14px; font-weight: 500; margin-top: 2px; }

/* status */
.status { height: 22px; flex: none; background: #217346; color: #fff; display: flex; align-items: center; position: relative; }
.ready { padding-left: 7px; font-size: 12px; margin-top: -1px; }
.macro { margin-left: 20px; }
.views { display: flex; margin-left: auto; height: 22px; }
.view { width: 38px; display: flex; align-items: center; justify-content: center; }
.view.on { background: #0a6332; }
.zoom { display: flex; align-items: center; margin-left: 8px; }
.minus { width: 6px; height: 2px; background: #fff; }
.slider { width: 100px; height: 1px; background: #fff; margin: 0 4px; position: relative; }
.slider i { position: absolute; left: 49px; top: -5px; width: 4px; height: 11px; background: #fff; }
.pct { width: 65px; padding-left: 14px; font: 13px/16px "Open Sans", sans-serif; color: #e6e6e6; }

/* dialog */
.dialog { position: absolute; left: 353px; top: 238px; width: 500px; height: 500px; background: linear-gradient(180deg, #54574a 0%, #7a6491 45%, #9a6ec4 73%, #b27ff6 100%); display: flex; flex-direction: column; color: #fff; }
.dlg-head { height: 40px; flex: none; display: flex; align-items: center; padding-left: 10px; font-size: 17px; }
.dlg-name { width: 86px; font: bold 15px/20px "Liberation Serif", serif; letter-spacing: -1.300px; }
.dlg-tab { color: #f26b1d; font-weight: 300; }
.tab-one { width: 176px; }
.tab-two { width: 132px; }
.dlg-help { font: bold 16px/16px "Liberation Serif", serif; width: 36px; }
.dlg-close { margin-left: 24px; }
.dlg-body { flex: 1; padding: 148px 0 0 6px; }
.dlg-title { font-size: 17.500px; line-height: 24px; font-weight: 300; }
.dlg-row { display: flex; height: 44px; align-items: center; padding-left: 78px; font-size: 18px; font-weight: 300; }
.dlg-title + .dlg-row { margin-top: 10px; }
.dlg-key { width: 166px; color: #f27f3d; }
.num { margin-right: 10px; }
.dlg-val { font-size: 16px; letter-spacing: .4px; }
.dlg-actions { display: flex; gap: 8px; padding-left: 140px; margin-top: 3px; }
.dlg-btn { width: 100px; height: 36px; background: transparent; border: 1px solid #66665f; color: #7fe3c8; font: 400 17.500px/24px "Noto Sans CJK SC", sans-serif; padding: 0; }
.dlg-btn .lat { margin-left: 4px; font-size: 16px; }
.dlg-btn.focus { outline: 1px dotted #2d2d2d; outline-offset: -4px; }

.arrows { position: absolute; left: -1px; top: -1px; pointer-events: none; }
```
